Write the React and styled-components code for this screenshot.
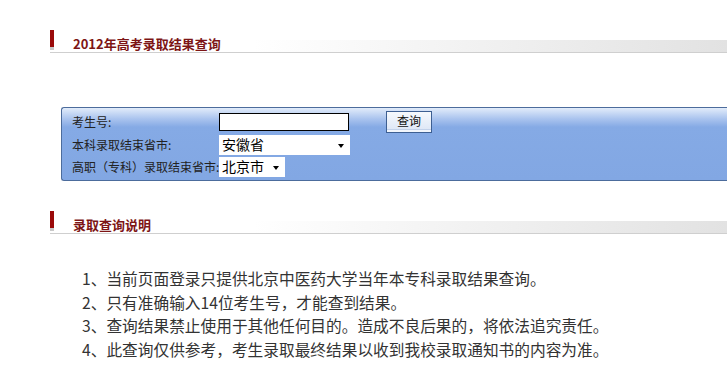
import React from 'react';
import styled, { createGlobalStyle } from 'styled-components';

const Global = createGlobalStyle`
  html, body { margin: 0; padding: 0; background: #fff; overflow: hidden; }
  body { font-family: "Noto Sans CJK SC", "Noto Sans", sans-serif; }
`;

const Page = styled.div`
  width: 727px;
  height: 381px;
  overflow: hidden;
  padding-top: 30px;
  box-sizing: border-box;
`;

const Heading = styled.div`
  margin-left: 50px;
  margin-top: ${(p) => p.$top || 0}px;
  height: 22px;
  display: flex;
  align-items: flex-end;
  border-bottom: 1px solid #cfcfcf;
  background: linear-gradient(to right, #fff 30%, #e2e2e2 100%) no-repeat left bottom / 100% 12px;
`;

const Mark = styled.span`
  width: 4px;
  height: 20px;
  align-self: flex-start;
  background: linear-gradient(#9a0a0a 0 17px, #c9c9c9 17px);
`;

const Title = styled.h2`
  margin: 0 0 1px 19px;
  font-size: 13px;
  line-height: 14px;
  font-weight: bold;
  color: #7d1515;
`;

const Panel = styled.form`
  margin: 54px 0 0 61px;
  border: 1px solid #4c6c9c;
  border-right: none;
  border-radius: 3px 0 0 3px;
  padding: 3px 0 3px 10px;
  display: flex;
  flex-direction: column;
  gap: 2px;
  background: linear-gradient(#e2ecfa 0, #a9c3ee 11px, #85aae5 19px, #82a7e3 100%);
`;

const Row = styled.div`
  display: flex;
  align-items: center;
  height: ${(p) => p.$h}px;
`;

const Label = styled.label`
  width: 147px;
  flex: none;
  font-size: 12px;
  line-height: 14px;
  color: #222;
  white-space: nowrap;
`;

const TextInput = styled.input`
  width: 130px;
  height: 18px;
  box-sizing: border-box;
  border: 1px solid #000;
  background: #fff;
  padding: 0 2px;
  margin: 0;
  outline: none;
`;

const Button = styled.button`
  margin-left: 37px;
  width: 46px;
  height: 22px;
  box-sizing: border-box;
  border: 1px solid #3d5f92;
  background: linear-gradient(#f6f9fd, #dbe5f5);
  box-shadow: inset 0 -2px 0 #f2f6fc, inset 0 -3px 0 #c3d2ea;
  font-family: "Noto Sans CJK SC", sans-serif;
  font-size: 12px;
  line-height: 14px;
  color: #111;
  padding: 0 0 2px;
  cursor: pointer;
`;

const SelectBox = styled.div`
  position: relative;
  width: ${(p) => p.$w}px;
  height: 20px;
  background: #fff;
`;

const Select = styled.select`
  appearance: none;
  -webkit-appearance: none;
  display: block;
  width: 100%;
  height: 17px;
  box-sizing: border-box;
  border: none;
  background: transparent;
  margin: 0;
  padding: 0 0 0 3px;
  font-family: "Noto Sans CJK SC", sans-serif;
  font-size: 14px;
  line-height: 16px;
  color: #000;
  outline: none;
`;

const Arrow = styled.span`
  position: absolute;
  right: 6px;
  top: 9px;
  width: 0;
  height: 0;
  border-left: 3.5px solid transparent;
  border-right: 3.5px solid transparent;
  border-top: 4px solid #000;
  pointer-events: none;
`;

const Notes = styled.ol`
  margin: 33px 0 0 82px;
  padding: 0;
  list-style: none;
  font-size: 15.7px;
  line-height: 23.5px;
  color: #333;
  white-space: nowrap;
`;

const Note = styled.li`
  margin: 0;
`;

const notes = [
  '1、当前页面登录只提供北京中医药大学当年本专科录取结果查询。',
  '2、只有准确输入14位考生号，才能查到结果。',
  '3、查询结果禁止使用于其他任何目的。造成不良后果的，将依法追究责任。',
  '4、此查询仅供参考，考生录取最终结果以收到我校录取通知书的内容为准。',
];

export default function App() {
  return (
    <>
      <Global />
      <Page>
        <Heading>
          <Mark />
          <Title>2012年高考录取结果查询</Title>
        </Heading>
        <Panel onSubmit={(e) => e.preventDefault()}>
          <Row $h={22}>
            <Label>考生号:</Label>
            <TextInput type="text" />
            <Button type="submit">查询</Button>
          </Row>
          <Row $h={20}>
            <Label>本科录取结束省市:</Label>
            <SelectBox $w={131}>
              <Select defaultValue="安徽省">
                <option>安徽省</option>
                <option>北京市</option>
              </Select>
              <Arrow />
            </SelectBox>
          </Row>
          <Row $h={20}>
            <Label>高职（专科）录取结束省市:</Label>
            <SelectBox $w={66}>
              <Select defaultValue="北京市">
                <option>北京市</option>
                <option>安徽省</option>
              </Select>
              <Arrow />
            </SelectBox>
          </Row>
        </Panel>
        <Heading $top={30}>
          <Mark />
          <Title>录取查询说明</Title>
        </Heading>
        <Notes>
          {notes.map((n) => (
            <Note key={n}>{n}</Note>
          ))}
        </Notes>
      </Page>
    </>
  );
}
